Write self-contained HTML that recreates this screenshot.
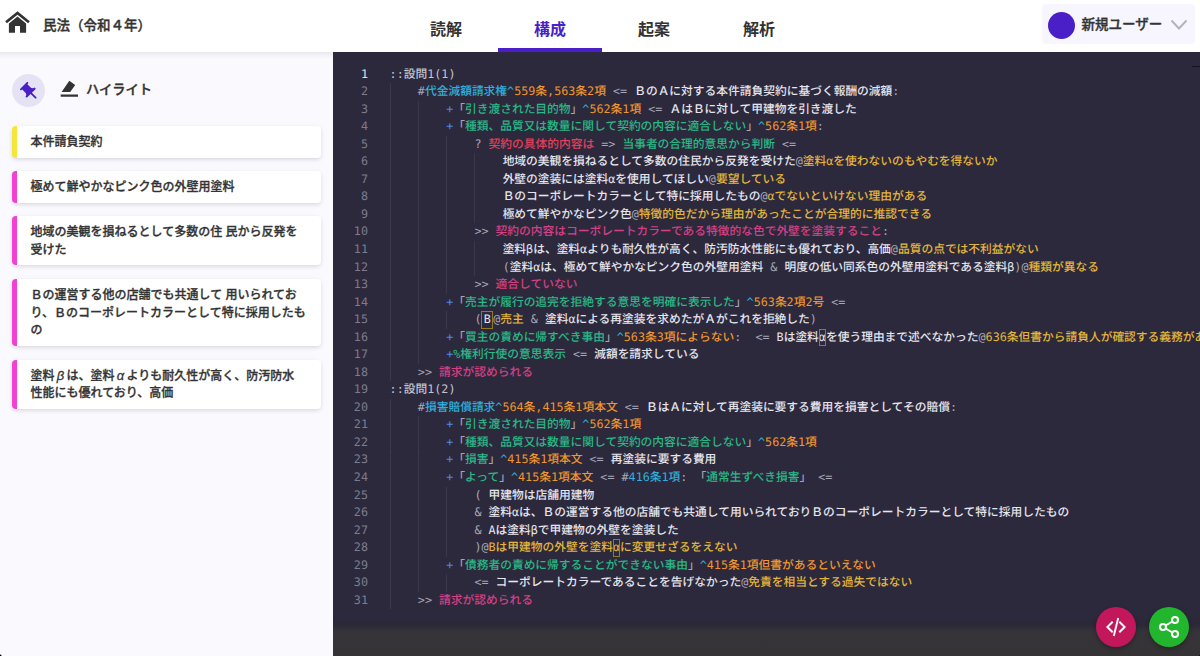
<!DOCTYPE html>
<html lang="ja">
<head>
<meta charset="utf-8">
<title>民法（令和４年）</title>
<style>
*{box-sizing:border-box;margin:0;padding:0}
html,body{width:1200px;height:656px;overflow:hidden;background:#faf9fd}
body{position:relative;font-family:"Liberation Sans","Noto Sans CJK JP",sans-serif;color:#333;-webkit-font-smoothing:antialiased}
#hdr{position:absolute;left:0;top:0;width:1200px;height:52px;background:#fff;z-index:5}
#hshadow{position:absolute;left:0;top:52px;width:333px;height:7px;background:linear-gradient(#e9e8ec,#f4f3f7 50%,#faf9fd);z-index:4}
#home{position:absolute;left:5px;top:11px;width:25px;height:22px}
#title{position:absolute;left:43px;top:14px;height:24px;line-height:24px;font-size:13.5px;font-weight:500;-webkit-text-stroke:.35px #333;letter-spacing:0;color:#333;white-space:nowrap}
.tab{position:absolute;top:0;width:104px;height:52px;text-align:center;font-size:16px;font-weight:700;line-height:60px;color:#333}
.tab.on{color:#4a1fc8}
#ind{position:absolute;left:498px;top:48px;width:104px;height:4px;background:#4a1fc8}
#user{position:absolute;left:1042px;top:4px;width:153px;height:40px;background:#f7f5fd;border-radius:4px}
#user i{position:absolute;left:6px;top:7.5px;width:27px;height:27px;border-radius:50%;background:#4a1fc8}
#user span{position:absolute;left:39.5px;top:9px;line-height:24px;font-size:13.5px;font-weight:500;-webkit-text-stroke:.35px #333;color:#333;white-space:nowrap}
#user svg{position:absolute;left:128px;top:15px;width:18px;height:12px}

#side{position:absolute;left:0;top:52px;width:333px;height:604px;background:#faf9fd}
#pin{position:absolute;left:12px;top:22px;width:33px;height:33px;border-radius:50%;background:#e6e2f5}
#pin svg{position:absolute;left:7.3px;top:6.5px;width:22px;height:22px}
#hl{position:absolute;left:60px;top:28px;width:18px;height:18px}
#hlt{position:absolute;left:86px;top:25.8px;line-height:24px;font-size:13.25px;font-weight:500;-webkit-text-stroke:.35px #333;color:#333;white-space:nowrap}
.card{position:absolute;left:12px;width:309px;background:#fff;border-left:5px solid #f140d2;border-radius:4px;box-shadow:0 2px 4px -1px rgba(60,50,90,.16),0 1px 6px rgba(60,50,90,.05);padding:8px 10px 6px 13.5px;font-size:12px;line-height:17.5px;font-weight:500;-webkit-text-stroke:.3px #333;color:#333;white-space:nowrap}
.card.y{border-left-color:#f5e63a}
.gk{display:inline-block;width:12px;text-align:center;font-style:italic;font-weight:400;font-size:13px;line-height:12px}

#ed{position:absolute;left:333px;top:52px;width:867px;height:604px;background:#2c293d;overflow:hidden;font-family:"DejaVu Sans Mono","Noto Sans CJK JP",monospace;font-size:11.74px;font-weight:500;color:#e5e5ed;text-rendering:geometricPrecision}
#band{position:absolute;left:0;top:565px;width:867px;height:39px;background:linear-gradient(#2c293d 0,#2b2839 3px,#2b2837 8px,#302d3a 10.5px,#36333b 15px,#363438 21px,#353336 39px)}
#ovr{position:absolute;left:859px;top:14px;width:8px;height:1.3px;background:#14112a}
.ln{position:absolute;left:0;width:35px;height:17.5px;line-height:17.5px;text-align:right;color:#7d7c8e;white-space:pre}
.ln.a{color:#e0e0e8}
.l{position:absolute;left:56.6px;height:17.5px;line-height:17.5px;white-space:pre}
.g{position:absolute;width:1px;background:rgba(255,255,255,.07)}
.d{color:#a6a6b6}.h{color:#c3c3cf}.c{color:#2fb0de}.o{color:#f0962c}.gr{color:#29b886}.b{color:#4c86ec}.r{color:#e2405b}.p{color:#d34184}.yl{color:#e3b63a}
.bx{display:inline-block;height:17.5px;line-height:17.5px;vertical-align:top;outline:1px solid #8f7d24;outline-offset:-1px}
.fab{position:absolute;width:40px;height:40px;border-radius:50%;top:607px;z-index:6;box-shadow:0 2px 5px rgba(0,0,0,.3)}
.cn{position:absolute;bottom:0;width:3px;height:3px;z-index:9}
.fab svg{position:absolute;left:8px;top:8px;width:24px;height:24px}
</style>
</head>
<body>
<div id="hdr">
  <svg id="home" viewBox="0 0 25 22"><path d="M12.5 0.3 L0.2 10.2 L1.9 12.2 L12.5 3.7 L23.1 12.2 L24.8 10.2 Z M12.5 5.6 L3.9 12.5 V21.8 H10 V15 H15 V21.8 H21.1 V12.5 Z" fill="#333"/></svg>
  <div id="title">民法（令和４年）</div>
  <div class="tab" style="left:394px">読解</div>
  <div class="tab on" style="left:498px">構成</div>
  <div class="tab" style="left:602px">起案</div>
  <div class="tab" style="left:707px">解析</div>
  <div id="ind"></div>
  <div id="user"><i></i><span>新規ユーザー</span><svg viewBox="0 0 18 12"><path d="M1.5 1.5 L9 9.5 L16.5 1.5" fill="none" stroke="#b5b2bf" stroke-width="2"/></svg></div>
</div>
<div id="hshadow"></div>

<div id="side">
  <div id="pin"><svg viewBox="0 0 24 24"><g transform="rotate(-45 12 12)"><path d="M16 9V4h1c.55 0 1-.45 1-1s-.45-1-1-1H7c-.55 0-1 .45-1 1s.45 1 1 1h1v5c0 1.66-1.34 3-3 3v2h5.97v7l1 1 1-1v-7H19v-2c-1.66 0-3-1.34-3-3z" fill="#4a1fc8"/></g></svg></div>
  <svg id="hl" viewBox="0 0 18 18"><path d="M9.3 0.8 L15.2 5 L10.2 12 H1.6 Z M0.7 14.4 H18 V16.7 H0.7 Z" fill="#333"/></svg>
  <div id="hlt">ハイライト</div>
  <div class="card y" style="top:74px">本件請負契約</div>
  <div class="card" style="top:119px">極めて鮮やかなピンク色の外壁用塗料</div>
  <div class="card" style="top:164px">地域の美観を損ねるとして多数の住 民から反発を<br>受けた</div>
  <div class="card" style="top:227px">Ｂの運営する他の店舗でも共通して 用いられてお<br>り、Ｂのコーポレートカラーとして特に採用したも<br>の</div>
  <div class="card" style="top:307.5px">塗料<i class="gk">β</i>は、塗料<i class="gk">α</i>よりも耐久性が高く、防汚防水<br>性能にも優れており、高価</div>
</div>

<div id="ed">
<div id="band"></div><div id="ovr"></div>
<div id="code">
<i class="g" style="left:56.60px;top:31.05px;height:17.6px"></i>
<i class="g" style="left:56.60px;top:48.59px;height:17.6px"></i>
<i class="g" style="left:84.87px;top:48.59px;height:17.6px"></i>
<i class="g" style="left:56.60px;top:66.14px;height:17.6px"></i>
<i class="g" style="left:84.87px;top:66.14px;height:17.6px"></i>
<i class="g" style="left:56.60px;top:83.68px;height:17.6px"></i>
<i class="g" style="left:84.87px;top:83.68px;height:17.6px"></i>
<i class="g" style="left:113.14px;top:83.68px;height:17.6px"></i>
<i class="g" style="left:56.60px;top:101.23px;height:17.6px"></i>
<i class="g" style="left:84.87px;top:101.23px;height:17.6px"></i>
<i class="g" style="left:113.14px;top:101.23px;height:17.6px"></i>
<i class="g" style="left:141.42px;top:101.23px;height:17.6px"></i>
<i class="g" style="left:56.60px;top:118.77px;height:17.6px"></i>
<i class="g" style="left:84.87px;top:118.77px;height:17.6px"></i>
<i class="g" style="left:113.14px;top:118.77px;height:17.6px"></i>
<i class="g" style="left:141.42px;top:118.77px;height:17.6px"></i>
<i class="g" style="left:56.60px;top:136.31px;height:17.6px"></i>
<i class="g" style="left:84.87px;top:136.31px;height:17.6px"></i>
<i class="g" style="left:113.14px;top:136.31px;height:17.6px"></i>
<i class="g" style="left:141.42px;top:136.31px;height:17.6px"></i>
<i class="g" style="left:56.60px;top:153.86px;height:17.6px"></i>
<i class="g" style="left:84.87px;top:153.86px;height:17.6px"></i>
<i class="g" style="left:113.14px;top:153.86px;height:17.6px"></i>
<i class="g" style="left:141.42px;top:153.86px;height:17.6px"></i>
<i class="g" style="left:56.60px;top:171.41px;height:17.6px"></i>
<i class="g" style="left:84.87px;top:171.41px;height:17.6px"></i>
<i class="g" style="left:113.14px;top:171.41px;height:17.6px"></i>
<i class="g" style="left:56.60px;top:188.95px;height:17.6px"></i>
<i class="g" style="left:84.87px;top:188.95px;height:17.6px"></i>
<i class="g" style="left:113.14px;top:188.95px;height:17.6px"></i>
<i class="g" style="left:141.42px;top:188.95px;height:17.6px"></i>
<i class="g" style="left:56.60px;top:206.50px;height:17.6px"></i>
<i class="g" style="left:84.87px;top:206.50px;height:17.6px"></i>
<i class="g" style="left:113.14px;top:206.50px;height:17.6px"></i>
<i class="g" style="left:141.42px;top:206.50px;height:17.6px"></i>
<i class="g" style="left:56.60px;top:224.04px;height:17.6px"></i>
<i class="g" style="left:84.87px;top:224.04px;height:17.6px"></i>
<i class="g" style="left:113.14px;top:224.04px;height:17.6px"></i>
<i class="g" style="left:56.60px;top:241.59px;height:17.6px"></i>
<i class="g" style="left:84.87px;top:241.59px;height:17.6px"></i>
<i class="g" style="left:56.60px;top:259.13px;height:17.6px"></i>
<i class="g" style="left:84.87px;top:259.13px;height:17.6px"></i>
<i class="g" style="left:113.14px;top:259.13px;height:17.6px"></i>
<i class="g" style="left:56.60px;top:276.68px;height:17.6px"></i>
<i class="g" style="left:84.87px;top:276.68px;height:17.6px"></i>
<i class="g" style="left:56.60px;top:294.22px;height:17.6px"></i>
<i class="g" style="left:84.87px;top:294.22px;height:17.6px"></i>
<i class="g" style="left:56.60px;top:311.77px;height:17.6px"></i>
<i class="g" style="left:56.60px;top:346.86px;height:17.6px"></i>
<i class="g" style="left:56.60px;top:364.40px;height:17.6px"></i>
<i class="g" style="left:84.87px;top:364.40px;height:17.6px"></i>
<i class="g" style="left:56.60px;top:381.95px;height:17.6px"></i>
<i class="g" style="left:84.87px;top:381.95px;height:17.6px"></i>
<i class="g" style="left:56.60px;top:399.49px;height:17.6px"></i>
<i class="g" style="left:84.87px;top:399.49px;height:17.6px"></i>
<i class="g" style="left:56.60px;top:417.04px;height:17.6px"></i>
<i class="g" style="left:84.87px;top:417.04px;height:17.6px"></i>
<i class="g" style="left:56.60px;top:434.58px;height:17.6px"></i>
<i class="g" style="left:84.87px;top:434.58px;height:17.6px"></i>
<i class="g" style="left:113.14px;top:434.58px;height:17.6px"></i>
<i class="g" style="left:56.60px;top:452.13px;height:17.6px"></i>
<i class="g" style="left:84.87px;top:452.13px;height:17.6px"></i>
<i class="g" style="left:113.14px;top:452.13px;height:17.6px"></i>
<i class="g" style="left:56.60px;top:469.67px;height:17.6px"></i>
<i class="g" style="left:84.87px;top:469.67px;height:17.6px"></i>
<i class="g" style="left:113.14px;top:469.67px;height:17.6px"></i>
<i class="g" style="left:56.60px;top:487.22px;height:17.6px"></i>
<i class="g" style="left:84.87px;top:487.22px;height:17.6px"></i>
<i class="g" style="left:113.14px;top:487.22px;height:17.6px"></i>
<i class="g" style="left:56.60px;top:504.76px;height:17.6px"></i>
<i class="g" style="left:84.87px;top:504.76px;height:17.6px"></i>
<i class="g" style="left:56.60px;top:522.31px;height:17.6px"></i>
<i class="g" style="left:84.87px;top:522.31px;height:17.6px"></i>
<i class="g" style="left:113.14px;top:522.31px;height:17.6px"></i>
<i class="g" style="left:56.60px;top:539.85px;height:17.6px"></i>
<div class="ln a" style="top:13.50px">1</div>
<div class="l" style="top:13.50px"><span class="h">::設問1(1)</span></div>
<div class="ln" style="top:31.05px">2</div>
<div class="l" style="top:31.05px">    <span class="d">#</span><span class="c">代金減額請求権^</span><span class="o">559条,563条2項</span><span class="d"> &lt;= </span>ＢのＡに対する本件請負契約に基づく報酬の減額<span class="d">:</span></div>
<div class="ln" style="top:48.59px">3</div>
<div class="l" style="top:48.59px">        <span class="b">+</span><span class="d">「</span><span class="gr">引き渡された目的物</span><span class="d">」</span><span class="c">^</span><span class="o">562条1項</span><span class="d"> &lt;= </span>ＡはＢに対して甲建物を引き渡した</div>
<div class="ln" style="top:66.14px">4</div>
<div class="l" style="top:66.14px">        <span class="b">+</span><span class="d">「</span><span class="gr">種類、品質又は数量に関して契約の内容に適合しない</span><span class="d">」</span><span class="c">^</span><span class="o">562条1項</span><span class="d">:</span></div>
<div class="ln" style="top:83.68px">5</div>
<div class="l" style="top:83.68px">            <span class="d">? </span><span class="r">契約の具体的内容は</span><span class="d"> =&gt; </span><span class="gr">当事者の合理的意思から判断</span><span class="d"> &lt;=</span></div>
<div class="ln" style="top:101.23px">6</div>
<div class="l" style="top:101.23px">                地域の美観を損ねるとして多数の住民から反発を受けた<span class="d">@</span><span class="yl">塗料αを使わないのもやむを得ないか</span></div>
<div class="ln" style="top:118.77px">7</div>
<div class="l" style="top:118.77px">                外壁の塗装には塗料αを使用してほしい<span class="d">@</span><span class="yl">要望している</span></div>
<div class="ln" style="top:136.31px">8</div>
<div class="l" style="top:136.31px">                Ｂのコーポレートカラーとして特に採用したもの<span class="d">@</span><span class="yl">αでないといけない理由がある</span></div>
<div class="ln" style="top:153.86px">9</div>
<div class="l" style="top:153.86px">                極めて鮮やかなピンク色<span class="d">@</span><span class="yl">特徴的色だから理由があったことが合理的に推認できる</span></div>
<div class="ln" style="top:171.41px">10</div>
<div class="l" style="top:171.41px">            <span class="d">&gt;&gt; </span><span class="p">契約の内容はコーポレートカラーである特徴的な色で外壁を塗装すること</span><span class="d">:</span></div>
<div class="ln" style="top:188.95px">11</div>
<div class="l" style="top:188.95px">                塗料βは、塗料αよりも耐久性が高く、防汚防水性能にも優れており、高価<span class="d">@</span><span class="yl">品質の点では不利益がない</span></div>
<div class="ln" style="top:206.50px">12</div>
<div class="l" style="top:206.50px">                <span class="d">(</span>塗料αは、極めて鮮やかなピンク色の外壁用塗料<span class="d"> &amp; </span>明度の低い同系色の外壁用塗料である塗料β<span class="d">)@</span><span class="yl">種類が異なる</span></div>
<div class="ln" style="top:224.04px">13</div>
<div class="l" style="top:224.04px">            <span class="d">&gt;&gt; </span><span class="p">適合していない</span></div>
<div class="ln" style="top:241.59px">14</div>
<div class="l" style="top:241.59px">        <span class="b">+</span><span class="d">「</span><span class="gr">売主が履行の追完を拒絶する意思を明確に表示した</span><span class="d">」</span><span class="c">^</span><span class="o">563条2項2号</span><span class="d"> &lt;=</span></div>
<div class="ln" style="top:259.13px">15</div>
<div class="l" style="top:259.13px">            <span class="d">(</span><span class="bx" style="width:11.74px;text-align:center">Β</span><span class="d">@</span><span class="yl">売主</span><span class="d"> &amp; </span>塗料αによる再塗装を求めたがＡがこれを拒絶した<span class="d">)</span></div>
<div class="ln" style="top:276.68px">16</div>
<div class="l" style="top:276.68px">        <span class="b">+</span><span class="d">「</span><span class="gr">買主の責めに帰すべき事由</span><span class="d">」</span><span class="c">^</span><span class="o">563条3項によらない</span><span class="d">:  &lt;= </span>Bは塗料<span class="bx">α</span>を使う理由まで述べなかった<span class="d">@</span><span class="yl">636条但書から請負人が確認する義務がある</span></div>
<div class="ln" style="top:294.22px">17</div>
<div class="l" style="top:294.22px">        <span class="b">+</span><span class="gr">%権利行使の意思表示</span><span class="d"> &lt;= </span>減額を請求している</div>
<div class="ln" style="top:311.77px">18</div>
<div class="l" style="top:311.77px">    <span class="d">&gt;&gt; </span><span class="p">請求が認められる</span></div>
<div class="ln" style="top:329.31px">19</div>
<div class="l" style="top:329.31px"><span class="h">::設問1(2)</span></div>
<div class="ln" style="top:346.86px">20</div>
<div class="l" style="top:346.86px">    <span class="d">#</span><span class="c">損害賠償請求^</span><span class="o">564条,415条1項本文</span><span class="d"> &lt;= </span>ＢはＡに対して再塗装に要する費用を損害としてその賠償<span class="d">:</span></div>
<div class="ln" style="top:364.40px">21</div>
<div class="l" style="top:364.40px">        <span class="b">+</span><span class="d">「</span><span class="gr">引き渡された目的物</span><span class="d">」</span><span class="c">^</span><span class="o">562条1項</span></div>
<div class="ln" style="top:381.95px">22</div>
<div class="l" style="top:381.95px">        <span class="b">+</span><span class="d">「</span><span class="gr">種類、品質又は数量に関して契約の内容に適合しない</span><span class="d">」</span><span class="c">^</span><span class="o">562条1項</span></div>
<div class="ln" style="top:399.49px">23</div>
<div class="l" style="top:399.49px">        <span class="b">+</span><span class="d">「</span><span class="gr">損害</span><span class="d">」</span><span class="c">^</span><span class="o">415条1項本文</span><span class="d"> &lt;= </span>再塗装に要する費用</div>
<div class="ln" style="top:417.04px">24</div>
<div class="l" style="top:417.04px">        <span class="b">+</span><span class="d">「</span><span class="gr">よって</span><span class="d">」</span><span class="c">^</span><span class="o">415条1項本文</span><span class="d"> &lt;= #</span><span class="c">416条1項</span><span class="d">: 「</span><span class="gr">通常生ずべき損害</span><span class="d">」 &lt;=</span></div>
<div class="ln" style="top:434.58px">25</div>
<div class="l" style="top:434.58px">            <span class="d">( </span>甲建物は店舗用建物</div>
<div class="ln" style="top:452.13px">26</div>
<div class="l" style="top:452.13px">            <span class="d">&amp; </span>塗料αは、Ｂの運営する他の店舗でも共通して用いられておりＢのコーポレートカラーとして特に採用したもの</div>
<div class="ln" style="top:469.67px">27</div>
<div class="l" style="top:469.67px">            <span class="d">&amp; </span>Aは塗料βで甲建物の外壁を塗装した</div>
<div class="ln" style="top:487.22px">28</div>
<div class="l" style="top:487.22px">            <span class="d">)@</span><span class="yl">Bは甲建物の外壁を塗料</span><span class="bx yl">α</span><span class="yl">に変更せざるをえない</span></div>
<div class="ln" style="top:504.76px">29</div>
<div class="l" style="top:504.76px">        <span class="b">+</span><span class="d">「</span><span class="gr">債務者の責めに帰することができない事由</span><span class="d">」</span><span class="c">^</span><span class="o">415条1項但書があるといえない</span></div>
<div class="ln" style="top:522.31px">30</div>
<div class="l" style="top:522.31px">            <span class="d">&lt;= </span>コーポレートカラーであることを告げなかった<span class="d">@</span><span class="yl">免責を相当とする過失ではない</span></div>
<div class="ln" style="top:539.85px">31</div>
<div class="l" style="top:539.85px">    <span class="d">&gt;&gt; </span><span class="p">請求が認められる</span></div>
</div>
</div>

<div class="fab" style="left:1096px;background:#c2185b"><svg viewBox="0 0 24 24"><path d="M9.4 16.6L4.8 12l4.6-4.6L8 6l-6 6 6 6 1.4-1.4zm5.2 0l4.6-4.6-4.6-4.6L16 6l6 6-6 6-1.4-1.4z" fill="#fff"/><path d="M14.2 3 L9.8 21" stroke="#fff" stroke-width="1.9"/></svg></div>
<div class="fab" style="left:1149px;background:#22b52e"><svg viewBox="0 0 24 24"><g fill="none" stroke="#fff" stroke-width="2"><circle cx="18" cy="5" r="3"/><circle cx="6" cy="12" r="3"/><circle cx="18" cy="19" r="3"/><path d="M8.6 10.5l6.8-4M8.6 13.5l6.8 4"/></g></svg></div>
<div class="cn" style="left:0;background:radial-gradient(circle at 100% 0,transparent 2.6px,#000 3.4px)"></div>
<div class="cn" style="right:0;width:2px;height:2px;background:radial-gradient(circle at 0 0,transparent 1.6px,#000 2.4px)"></div>
</body>
</html>
